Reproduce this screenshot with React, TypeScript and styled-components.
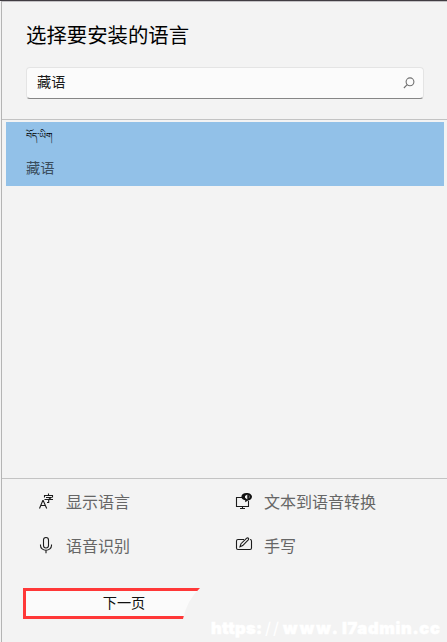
import React from "react";
import styled, { createGlobalStyle } from "styled-components";

const GlobalStyle = createGlobalStyle`
  * { box-sizing: border-box; }
  body { margin: 0; background: #f3f3f3; overflow: hidden; }
`;

const Dialog = styled.main`
  position: relative;
  display: flex;
  flex-direction: column;
  width: 447px;
  height: 642px;
  padding-left: 1px;
  background: #f3f3f3;
  border-top: 1px solid #403c42;
  font-family: "Noto Sans CJK SC", sans-serif;
  color: #1a1a1a;
`;

const Panel = styled.div`
  flex: 1;
  display: flex;
  flex-direction: column;
  border-left: 1px solid #b4b4b4;
  border-top: 1px solid #c3c1c4;
`;

const Header = styled.header`
  height: 118px;
  padding: 18px 23px 0 24px;
  border-bottom: 1px solid #c3c3c3;
`;

const Title = styled.h1`
  margin: 0;
  height: 47px;
  font-size: 20.4px;
  font-weight: 400;
  line-height: 28px;
  color: #000;
  white-space: nowrap;
`;

const SearchBox = styled.label`
  display: flex;
  align-items: center;
  justify-content: space-between;
  height: 32px;
  padding: 0 8px 0 10px;
  background: #fbfbfb;
  border: 1px solid #e4e4e4;
  border-bottom: 1px solid #868686;
  border-radius: 4px;
`;

const SearchText = styled.span`
  padding-bottom: 4px;
  font-size: 14.2px;
  line-height: 20px;
`;

const List = styled.section`
  height: 359px;
  padding: 2px 3px 0 4px;
  border-bottom: 1px solid #c3c3c3;
`;

const LanguageRow = styled.div`
  display: flex;
  flex-direction: column;
  height: 64px;
  padding: 3px 20px;
  background: #92c1e8;
`;

const NativeName = styled.span`
  height: 32px;
  padding-top: 4px;
  font-family: "Noto Serif Tibetan", "Noto Sans Tibetan", "Microsoft Himalaya", "DejaVu Sans", sans-serif;
  font-size: 9.3px;
  line-height: 20px;
  color: #000;
`;

const LocalName = styled.span`
  font-size: 14.2px;
  line-height: 20px;
  color: #3a4d5d;
`;

const Features = styled.section`
  display: grid;
  grid-template-columns: 198px 1fr;
  grid-auto-rows: 44px;
  padding: 1px 0 0 36px;
  height: 109px;
`;

const Feature = styled.div`
  display: flex;
  align-items: center;
  gap: 12px;
  font-size: 16px;
  line-height: 24px;
  color: #666;
`;

const FeatureName = styled.span`
  padding-bottom: 2px;
`;

const NextButton = styled.button`
  width: 178px;
  height: 31px;
  margin: 0 0 0 21px;
  padding: 0 0 3px 21px;
  border: 3px solid #ff3838;
  border-right: 0;
  background: #fbfbfb;
  clip-path: path("M0 0H177Q164 12 160 31H0Z");
  font-family: inherit;
  font-size: 14.2px;
  line-height: 22px;
  color: #111;
`;

const Watermark = styled.div`
  position: absolute;
  left: 211px;
  top: 616px;
  display: flex;
  font-family: Inter, sans-serif;
  font-size: 16.5px;
  font-weight: 900;
  line-height: 22px;
  color: #fff;
  white-space: nowrap;
`;

const Segment = styled.span<{ $width: number; $spacing: number; $light?: boolean }>`
  width: ${(p) => p.$width}px;
  letter-spacing: ${(p) => p.$spacing}px;
  font-weight: ${(p) => (p.$light ? 400 : 900)};
  -webkit-text-stroke: ${(p) => (p.$light ? 0 : 0.5)}px #fff;
`;

const Icon = styled.svg<{ $color?: string }>`
  flex: none;
  fill: none;
  stroke: ${(p) => p.$color ?? "#1b1b1b"};
  stroke-width: 1.1;
  overflow: visible;
`;

const SearchIcon = () => (
  <Icon width="12" height="12" viewBox="0 0 12 12" $color="#707070">
    <circle cx="7" cy="4.8" r="3.9" />
    <path d="M4.2 7.6L.9 11" />
  </Icon>
);

const DisplayIcon = () => (
  <Icon width="16" height="16" viewBox="0 0 16 16">
    <path d="M1.5 14.5L4.8 6.5H5.2L8.7 14.5M2.7 11.5H7.5M6.5 3.5V1.5H14.5V3.5M10.5 -.5V1.5M8 3.5H13L10.7 5.5V8.5H9M6.5 5.5H15" />
  </Icon>
);

const SpeechIcon = () => (
  <Icon width="16" height="16" viewBox="0 0 16 16">
    <rect x="5.5" y="-.5" width="5" height="10.5" rx="2.5" />
    <path d="M2.5 6.5V7.5C2.5 10.2 5 12.2 8 12.2S13.5 10.2 13.5 7.5V6.5M8 12.2V15.2" />
  </Icon>
);

const TextToSpeechIcon = () => (
  <Icon width="16" height="16" viewBox="0 0 16 16">
    <path d="M6 3.5H.5V12.5H12.5V7M6.5 12.5V14.5M4 14.5H9" />
    <path d="M10.5 -1C13.6 -1 16 .6 16 2.8S13.7 6.3 11.6 6.7L9.2 8.3V6.3C6.8 5.8 5.4 4.7 5.4 2.8 5.4 .6 7.5 -1 10.5 -1Z" fill="#111" stroke="none" />
    <path d="M11.3 .4V5.4L9 3.8V2Z" fill="#f3f3f3" stroke="none" />
    <path d="M13 1.4Q14 2.8 13 4.2" stroke="#999" strokeWidth=".7" />
  </Icon>
);

const HandwritingIcon = () => (
  <Icon width="16" height="16" viewBox="0 0 16 16">
    <path d="M8 1.5H2Q.5 1.5 .5 3V10Q.5 11.5 2 11.5H14Q15.5 11.5 15.5 10V3Q15.5 1.5 14 1.5" />
    <path d="M4 8.7L5 5.7L10.7 .2Q11.6 -.5 12.4 .2Q13.1 1 12.3 1.9L6.7 7.6Z" />
  </Icon>
);

export default function App() {
  return (
    <>
      <GlobalStyle />
      <Dialog>
        <Panel>
          <Header>
            <Title>选择要安装的语言</Title>
            <SearchBox><SearchText>藏语</SearchText><SearchIcon /></SearchBox>
          </Header>
          <List>
            <LanguageRow>
              <NativeName lang="bo">བོད་ཡིག</NativeName>
              <LocalName>藏语</LocalName>
            </LanguageRow>
          </List>
          <Features>
            <Feature><DisplayIcon /><FeatureName>显示语言</FeatureName></Feature>
            <Feature><TextToSpeechIcon /><FeatureName>文本到语音转换</FeatureName></Feature>
            <Feature><SpeechIcon /><FeatureName>语音识别</FeatureName></Feature>
            <Feature><HandwritingIcon /><FeatureName>手写</FeatureName></Feature>
          </Features>
          <NextButton>下一页</NextButton>
        </Panel>
        <Watermark>
          <Segment $width={54} $spacing={0.3}>https:</Segment>
          <Segment $width={18} $spacing={2} $light>//</Segment>
          <Segment $width={59} $spacing={2.2}>www.</Segment>
          <Segment $width={100} $spacing={0.7}>l7admin.cc</Segment>
        </Watermark>
      </Dialog>
    </>
  );
}
